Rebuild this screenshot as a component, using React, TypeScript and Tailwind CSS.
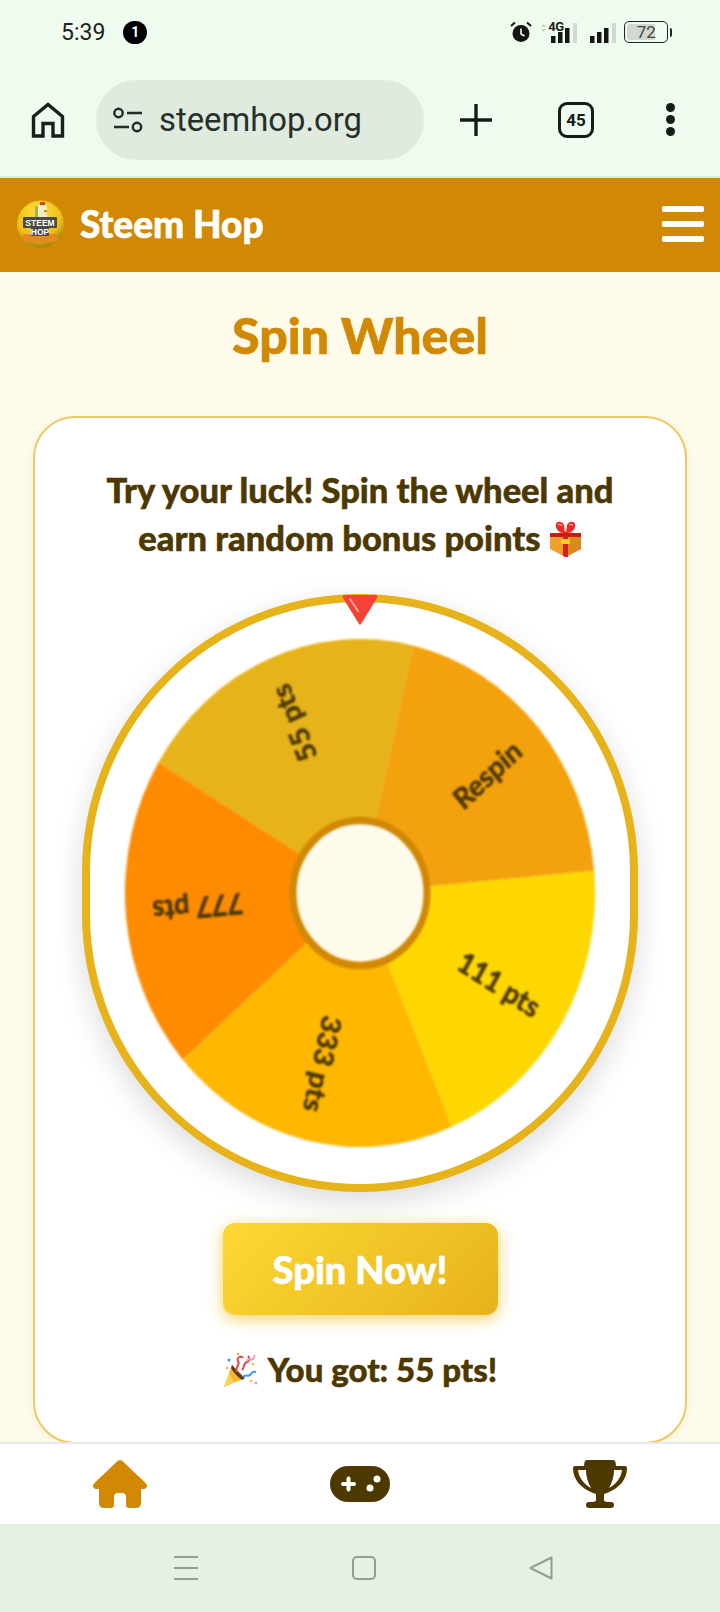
const BRAND = "#d18803";
const INK = "#4d3800";

type Slice = { label: string; color: string };

// Clockwise from the top of the wheel, starting at the 13deg offset it stopped on
const SLICES: Slice[] = [
  { label: "Respin", color: "#f4a10e" },
  { label: "111 pts", color: "#ffd700" },
  { label: "333 pts", color: "#ffb700" },
  { label: "777 pts", color: "#ff8c00" },
  { label: "55 pts", color: "#e6b31a" },
];

const WHEEL_START = 13;
const WHEEL_R = 235;

function rimPoint(deg: number) {
  const rad = ((deg - 90) * Math.PI) / 180;
  return `${WHEEL_R + WHEEL_R * Math.cos(rad)} ${WHEEL_R + WHEEL_R * Math.sin(rad)}`;
}

function Wheel() {
  const step = 360 / SLICES.length;

  return (
    <svg
      className="h-[508px] w-[470px] blur-[0.8px]"
      preserveAspectRatio="none"
      viewBox="0 0 470 470"
    >
      {SLICES.map((slice, i) => {
        const from = WHEEL_START + i * step;
        return (
          <path
            d={`M235 235 L${rimPoint(from)} A235 235 0 0 1 ${rimPoint(from + step)} Z`}
            fill={slice.color}
            key={slice.label}
          />
        );
      })}
      {SLICES.map((slice, i) => {
        const mid = WHEEL_START + i * step + step / 2;
        return (
          <text
            dominantBaseline="central"
            fill={INK}
            fontFamily="Lato, sans-serif"
            fontSize="27"
            fontWeight="700"
            key={slice.label}
            stroke={INK}
            strokeWidth="0.6"
            textAnchor="end"
            transform={`rotate(${mid - 90} 235 235)`}
            x="443"
            y="235"
          >
            {slice.label}
          </text>
        );
      })}
      <circle cx="235" cy="235" fill="#fffbea" r="67" stroke={BRAND} strokeWidth="7" />
    </svg>
  );
}

function SignalBars({ className }: { className?: string }) {
  return (
    <svg className={className} height="22" viewBox="0 0 30 22" width="30">
      <rect fill="#151515" height="7" width="4.500" x="3" y="15" />
      <rect fill="#151515" height="11" width="4.500" x="10" y="11" />
      <rect fill="#151515" height="15" width="4.500" x="17" y="7" />
      <rect fill="#d3d9d2" height="20" width="4" x="25" y="2" />
    </svg>
  );
}

function StatusBar() {
  return (
    <div className="flex h-[64px] items-center pl-[61px] font-['Roboto',sans-serif] text-[#222]">
      <span className="text-[23px] leading-none">5:39</span>
      <span className="ml-[18px] flex h-[23px] w-[24px] items-center justify-center rounded-full bg-black text-[14px] font-bold text-white">
        1
      </span>
      <svg className="ml-[363px]" height="22" viewBox="0 0 22 22" width="22">
        <circle cx="11" cy="12.500" fill="#151515" r="8.500" />
        <path d="M11 7.500v5.500l3.500 2" fill="none" stroke="#f0fbef" strokeWidth="1.600" />
        <path d="M1 5l4-3.500M21 5l-4-3.500" stroke="#151515" strokeWidth="2" />
      </svg>
      <svg className="ml-[8px]" height="22" viewBox="0 0 8 22" width="8">
        <path d="M1 6l2.500-3L6 6zM1 8l2.500 3L6 8z" fill="#c9d0c8" />
      </svg>
      <div className="relative h-[22px] w-[30px]">
        <span className="absolute left-0 top-[-1px] text-[13px] font-bold leading-[14px] tracking-[-0.5px]">
          4G
        </span>
        <SignalBars />
      </div>
      <SignalBars className="ml-[9px]" />
      <div className="relative ml-[7px] flex h-[22px] w-[44px] items-center justify-center rounded-[5px] border-[1.5px] border-[#222]">
        <span className="absolute inset-y-[2px] left-[2px] w-[28px] rounded-[2px] bg-[#d2d8d0]" />
        <span className="relative text-[17px] leading-none text-[#444]">72</span>
        <span className="absolute right-[-5px] h-[9px] w-[2px] rounded-r bg-[#222]" />
      </div>
    </div>
  );
}

function BrowserBar() {
  return (
    <div className="flex h-[114px] items-start border-b-2 border-[#dfe8de] pt-[16px] font-['Roboto',sans-serif]">
      <svg className="ml-[31px] mt-[22px] shrink-0" height="36" viewBox="0 0 34 36" width="34">
        <path
          d="M2.500 34V14.500L17 2.500l14.500 12V34H22V21.500H12V34z"
          fill="none"
          stroke="#16211b"
          strokeWidth="3.400"
        />
      </svg>
      <div className="ml-[31px] flex h-[80px] w-[328px] items-center rounded-full bg-[#e0eadf] pl-[17px]">
        <svg height="26" viewBox="0 0 30 26" width="30">
          <circle cx="5.500" cy="6" fill="none" r="4.200" stroke="#232b26" strokeWidth="2.400" />
          <circle cx="24" cy="20" fill="none" r="4.200" stroke="#232b26" strokeWidth="2.400" />
          <path d="M14 6h15M1 20h15" stroke="#232b26" strokeWidth="2.400" />
        </svg>
        <span className="ml-[16px] text-[32.8px] leading-none text-[#26302a]">steemhop.org</span>
      </div>
      <svg className="ml-[36px] mt-[24px] shrink-0" height="32" viewBox="0 0 32 32" width="32">
        <path d="M16 1v30M1 16h30" stroke="#141c17" strokeLinecap="round" strokeWidth="3.400" />
      </svg>
      <div className="ml-[66px] mt-[22px] flex h-[36px] w-[36px] shrink-0 items-center justify-center rounded-[9px] border-[3.5px] border-[#141c17] text-[17px] font-bold leading-none text-[#141c17]">
        45
      </div>
      <div className="ml-[72px] mt-[23px] flex shrink-0 flex-col gap-[3px]">
        <span className="h-[9px] w-[9px] rounded-full bg-[#141c17]" />
        <span className="h-[9px] w-[9px] rounded-full bg-[#141c17]" />
        <span className="h-[9px] w-[9px] rounded-full bg-[#141c17]" />
      </div>
    </div>
  );
}

function Logo() {
  return (
    <svg className="shrink-0" height="48" viewBox="0 0 47 48" width="47">
      <defs>
        <radialGradient cx="45%" cy="30%" id="logoBall" r="75%">
          <stop offset="0%" stopColor="#ffe23a" />
          <stop offset="65%" stopColor="#efbd17" />
          <stop offset="100%" stopColor="#94700f" />
        </radialGradient>
      </defs>
      <circle cx="23.500" cy="24" fill="url(#logoBall)" r="23.500" />
      <rect fill="#a9b44a" height="13" width="4" x="18" y="6" />
      <rect fill="#f5ecc8" height="14" width="9" x="21" y="5" />
      <rect fill="#d9402a" height="3" width="5" x="23" y="2" />
      <rect fill="#e58a14" height="2" width="3" x="27" y="10" />
      <rect fill="#e28a1c" height="8" rx="1" width="35" x="6" y="34" />
      <rect fill="#4d4b45" height="11" rx="1" width="34" x="6" y="17" />
      <rect fill="#4d4b45" height="9" rx="1" width="18" x="14" y="27" />
      <text
        fill="#fff"
        fontFamily="'Liberation Sans', sans-serif"
        fontSize="8.500"
        fontWeight="700"
        textAnchor="middle"
        x="23"
        y="26"
      >
        STEEM
      </text>
      <text
        fill="#fff"
        fontFamily="'Liberation Sans', sans-serif"
        fontSize="8.500"
        fontWeight="700"
        textAnchor="middle"
        x="23"
        y="35"
      >
        HOP
      </text>
    </svg>
  );
}

function SiteHeader() {
  return (
    <header className="flex h-[94px] items-center bg-[#d18803] pb-[2px] pl-[17px] pr-[16px]">
      <Logo />
      <span className="ml-[16px] mb-[2px] text-[37px] font-black leading-none text-white [-webkit-text-stroke:0.6px_#fff]">
        Steem Hop
      </span>
      <div className="ml-auto flex flex-col gap-[9px]">
        <span className="h-[6px] w-[42px] rounded-[2px] bg-white" />
        <span className="h-[6px] w-[42px] rounded-[2px] bg-white" />
        <span className="h-[6px] w-[42px] rounded-[2px] bg-white" />
      </div>
    </header>
  );
}

function GiftIcon() {
  return (
    <svg className="ml-[8px] inline-block align-[-6px]" height="36" viewBox="0 0 33 36" width="33">
      <path d="M1 14l15.500-4L32 14v14l-15.500 8L1 28z" fill="#efa12c" />
      <path d="M16.500 18L32 14v14l-15.500 8z" fill="#d98a1e" />
      <path d="M14 11h5v25l-2.500 0-2.500-1z" fill="#d5201c" />
      <path d="M12 18l9 0 0 5-9 0z" fill="#ffc928" />
      <path d="M1 12h31v4H1z" fill="#c81e1a" />
      <path d="M16 12C10 12 6 8 7 3c1-3 6-3 8 1zM17 12c6 0 10-4 9-9-1-3-6-3-8 1z" fill="#ee2a24" />
      <path d="M9 4c1-1 3-1 4 1M20 4c1-1 3-1 4 1" fill="none" stroke="#ff9a92" strokeWidth="1.200" />
    </svg>
  );
}

function PartyIcon() {
  return (
    <svg className="mr-[9px] inline-block align-[-6px]" height="36" viewBox="0 0 36 36" width="36">
      <path d="M1 35l8-22 13 13z" fill="#f6b62a" />
      <path d="M1 35l5-14 5 9z" fill="#fad35a" />
      <path d="M9 13c3 3 8 9 13 13l-3 2C15 25 10 20 8 16z" fill="#5a3a24" />
      <path
        d="M14 20c-3-5 4-7 1-11-2-3 3-6 5-3M19 18c3-3 1-7 5-8 3-1 3-4 1-6"
        fill="none"
        stroke="#e5484d"
        strokeWidth="2"
      />
      <path d="M24 8c3-2 4 1 6-1 2-2 1-3 2-4" fill="none" stroke="#ea9bc0" strokeWidth="2" />
      <path d="M20 25c3-3 5 0 7-2s2-4 6-3" fill="none" stroke="#2d9fe0" strokeWidth="2" />
      <circle cx="6" cy="8" fill="#2d9fe0" r="1.500" />
      <circle cx="4" cy="16" fill="#f6b62a" r="1.200" />
      <circle cx="15" cy="2" fill="#f6b62a" r="1.300" />
      <circle cx="30" cy="12" fill="#f6b62a" r="1.300" />
      <circle cx="33" cy="31" fill="#ea9bc0" r="1.500" />
      <circle cx="28" cy="29" fill="#f6b62a" r="1.200" />
    </svg>
  );
}

function BottomNav() {
  return (
    <nav className="relative grid h-[82px] shrink-0 grid-cols-3 items-center border-t-2 border-[#e8e8ea] bg-white">
      <div className="flex justify-center">
        <svg height="48" viewBox="0 0 54 48" width="54">
          <path
            d="M24.500 1q2.500-2 5 0L53 23.500q2 2 .5 4q-1 1.500-3 1.500H48V43q0 5-5 5H36q-3 0-3-3V37q0-4-4-4h-4q-4 0-4 4v8q0 3-3 3H11q-5 0-5-5V29H3.500q-2 0-3-1.500q-1.500-2 .5-4z"
            fill={BRAND}
          />
        </svg>
      </div>
      <div className="flex justify-center">
        <svg height="36" viewBox="0 0 60 36" width="60">
          <rect fill={INK} height="36" rx="18" width="60" />
          <path d="M13 18h11M18.500 12.500v11" stroke="#fff" strokeLinecap="round" strokeWidth="4" />
          <circle cx="47" cy="13" fill="#fff" r="3.500" />
          <circle cx="40" cy="22" fill="#fff" r="3.500" />
        </svg>
      </div>
      <div className="flex justify-center">
        <svg height="48" viewBox="14 9 54 48" width="54">
          <path
            d="M29 9h25q2 0 2.500 2l.5 4h9q2 0 2 2c0 12-8 20-20 25l-3 1v6q0 2 5 2h2q3 0 3 3q0 3-3 3H30q-3 0-3-3q0-3 3-3h2q5 0 5-2v-6l-3-1c-12-5-20-13-20-25q0-2 2-2h9l.5-4q.5-2 2.500-2zM19 19h8c0 6 2 13 5 18c-7-4-12-10-13-18zM63 19h-8c0 6-2 13-5 18c7-4 12-10 13-18z"
            fill={INK}
            fillRule="evenodd"
          />
        </svg>
      </div>
    </nav>
  );
}

function SystemNav() {
  return (
    <div className="flex h-[88px] shrink-0 items-start bg-[#e6f0e3] pt-[32px]">
      <div className="ml-[174px] flex h-[24px] w-[24px] flex-col justify-between">
        <span className="h-[2px] bg-[#939c95]" />
        <span className="h-[2px] bg-[#939c95]" />
        <span className="h-[2px] bg-[#939c95]" />
      </div>
      <div className="ml-[154px] h-[24px] w-[24px] rounded-[5px] border-2 border-[#939c95]" />
      <svg className="ml-[153px]" height="24" viewBox="0 0 24 24" width="24">
        <path
          d="M22.500 1.500v21L1.500 12z"
          fill="none"
          stroke="#939c95"
          strokeLinejoin="round"
          strokeWidth="2"
        />
      </svg>
    </div>
  );
}

export default function App() {
  return (
    <div className="flex h-[1612px] w-[720px] flex-col overflow-hidden bg-[#fffbea] font-['Lato',sans-serif]">
      <div className="shrink-0 bg-[#f0fbef]">
        <StatusBar />
        <BrowserBar />
      </div>
      <SiteHeader />

      <main className="min-h-0 flex-1 overflow-hidden">
        <h1 className="mt-[31px] text-center text-[50px] font-black leading-[64px] text-[#d18803] [-webkit-text-stroke:0.6px_#d18803]">
          Spin Wheel
        </h1>

        <section className="mx-[33px] mt-[49px] flex h-[1028px] flex-col items-center rounded-[42px] border-2 border-[#edc964] bg-white pt-[48px] shadow-[0_4px_16px_rgba(0,0,0,0.04)]">
          <p className="text-center text-[34.5px] font-black leading-[48px] text-[#4d3800] [-webkit-text-stroke:0.5px_#4d3800]">
            Try your luck! Spin the wheel and
            <br />
            earn random bonus points
            <GiftIcon />
          </p>

          <div className="relative mt-[32px] flex h-[598px] w-[556px] items-center justify-center rounded-full border-8 border-[#e6b31a] bg-white shadow-[0_10px_30px_rgba(0,0,0,0.14)]">
            <Wheel />
            <svg
              className="absolute left-1/2 top-[-8px] -translate-x-1/2"
              height="32"
              viewBox="0 0 36 32"
              width="36"
            >
              <path d="M2 1h32c1 0 2 1 1 3L19 30c-.500 1-1.500 1-2 0L1 4C0 2 1 1 2 1z" fill="#f44336" />
              <path d="M8 5l8 12" stroke="#f8a3a0" strokeLinecap="round" strokeWidth="2" />
            </svg>
          </div>

          <button
            className="mt-[31px] h-[92px] w-[275px] rounded-[12px] bg-[linear-gradient(135deg,#fdd835,#e6b31a)] text-[38px] font-black text-white shadow-[0_4px_16px_rgba(240,190,40,0.7)] [-webkit-text-stroke:0.6px_#fff]"
            type="button"
          >
            Spin Now!
          </button>

          <p className="mt-[32px] text-[33px] font-black leading-[44px] text-[#4d3800] [-webkit-text-stroke:0.5px_#4d3800]">
            <PartyIcon />
            You got: 55 pts!
          </p>
        </section>
      </main>

      <BottomNav />
      <SystemNav />
    </div>
  );
}
